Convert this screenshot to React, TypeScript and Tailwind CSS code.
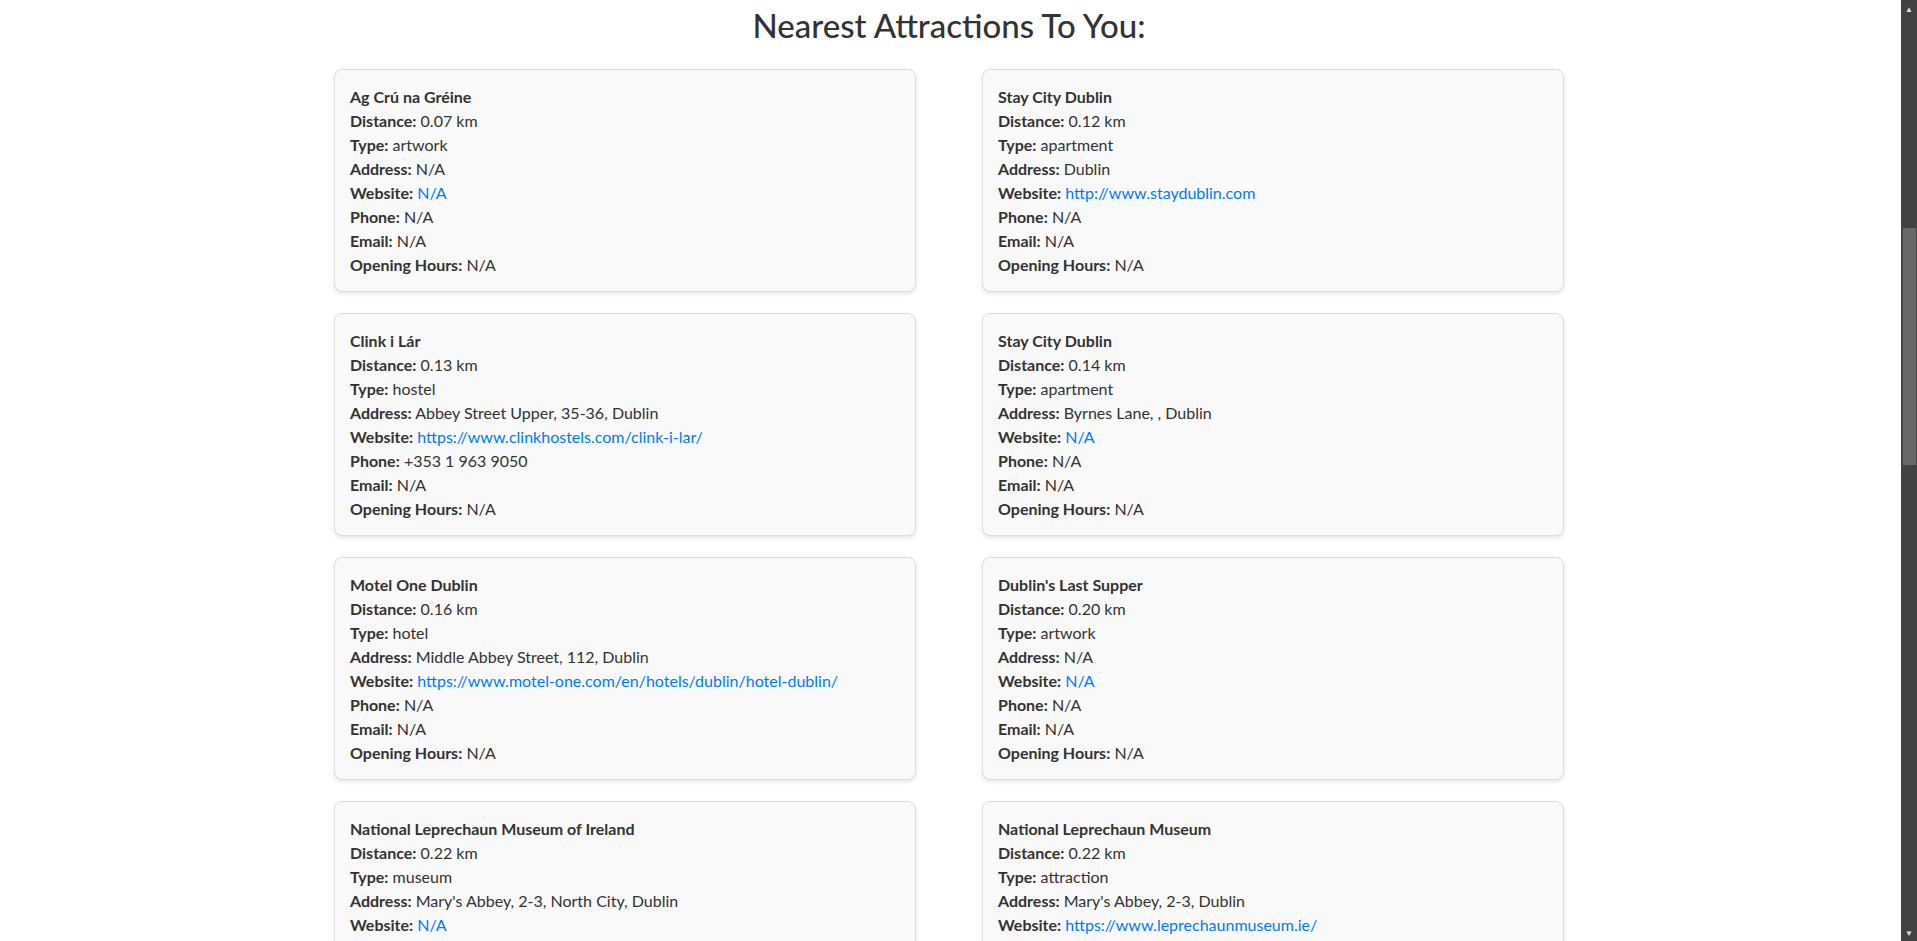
import React from 'react';

type Attraction = {
  name: string;
  distance: string;
  type: string;
  address: string;
  website: string;
  phone: string;
  email: string;
  hours: string;
};

const attractions: Attraction[] = [
  { name: 'Ag Crú na Gréine', distance: '0.07', type: 'artwork', address: 'N/A', website: 'N/A', phone: 'N/A', email: 'N/A', hours: 'N/A' },
  { name: 'Stay City Dublin', distance: '0.12', type: 'apartment', address: 'Dublin', website: 'http://www.staydublin.com', phone: 'N/A', email: 'N/A', hours: 'N/A' },
  { name: 'Clink i Lár', distance: '0.13', type: 'hostel', address: 'Abbey Street Upper, 35-36, Dublin', website: 'https://www.clinkhostels.com/clink-i-lar/', phone: '+353 1 963 9050', email: 'N/A', hours: 'N/A' },
  { name: 'Stay City Dublin', distance: '0.14', type: 'apartment', address: 'Byrnes Lane, , Dublin', website: 'N/A', phone: 'N/A', email: 'N/A', hours: 'N/A' },
  { name: 'Motel One Dublin', distance: '0.16', type: 'hotel', address: 'Middle Abbey Street, 112, Dublin', website: 'https://www.motel-one.com/en/hotels/dublin/hotel-dublin/', phone: 'N/A', email: 'N/A', hours: 'N/A' },
  { name: "Dublin's Last Supper", distance: '0.20', type: 'artwork', address: 'N/A', website: 'N/A', phone: 'N/A', email: 'N/A', hours: 'N/A' },
  { name: 'National Leprechaun Museum of Ireland', distance: '0.22', type: 'museum', address: "Mary's Abbey, 2-3, North City, Dublin", website: 'N/A', phone: 'N/A', email: 'N/A', hours: 'N/A' },
  { name: 'National Leprechaun Museum', distance: '0.22', type: 'attraction', address: "Mary's Abbey, 2-3, Dublin", website: 'https://www.leprechaunmuseum.ie/', phone: 'N/A', email: 'N/A', hours: 'N/A' },
];

const Row: React.FC<{ label: string; children: React.ReactNode }> = ({ label, children }) => (
  <div>
    <span className="font-bold">{label}:</span> {children}
  </div>
);

const AttractionCard: React.FC<{ a: Attraction }> = ({ a }) => (
  <div className="bg-[#f9f9f9] border border-[#dddddd] rounded-[8px] shadow-[0_2px_4px_rgba(0,0,0,0.1)] px-[15px] pt-[15px] pb-[14px]">
    <div className="font-bold">{a.name}</div>
    <Row label="Distance">{a.distance} km</Row>
    <Row label="Type">{a.type}</Row>
    <Row label="Address">{a.address}</Row>
    <Row label="Website">
      <a href="#" className="text-[#007bff]">{a.website}</a>
    </Row>
    <Row label="Phone">{a.phone}</Row>
    <Row label="Email">{a.email}</Row>
    <Row label="Opening Hours">{a.hours}</Row>
  </div>
);

// fake dark browser scrollbar on the right edge
const Scrollbar: React.FC = () => (
  <div className="w-[16px] bg-[#424242] flex flex-col shrink-0">
    <div className="h-[17px] flex items-center justify-center text-[#e0e0e0] text-[8px] leading-none">▲</div>
    <div className="h-[211px]" />
    <div className="h-[237px] ml-[2px] mr-[1px] bg-[#686868]" />
    <div className="flex-1" />
    <div className="h-[17px] flex items-center justify-center text-[#e0e0e0] text-[8px] leading-none">▼</div>
  </div>
);

const App: React.FC = () => {
  return (
    <div className="flex h-[941px] w-full overflow-hidden bg-white text-[#333333] font-['Lato','Segoe_UI',sans-serif] text-[16px] leading-[24px]">
      <div className="flex-1 overflow-hidden">
        <div className="ml-[334px] w-[1230px]">
          <h2 className="text-center text-[33px] leading-[40px] font-medium text-[#333333] mt-[5px] mb-[24px]">
            Nearest Attractions To You:
          </h2>
          <div className="grid grid-cols-[582px_582px] gap-x-[66px] gap-y-[21px]">
            {attractions.map((a, i) => (
              <AttractionCard key={i} a={a} />
            ))}
          </div>
        </div>
      </div>
      <Scrollbar />
    </div>
  );
};

export default App;
